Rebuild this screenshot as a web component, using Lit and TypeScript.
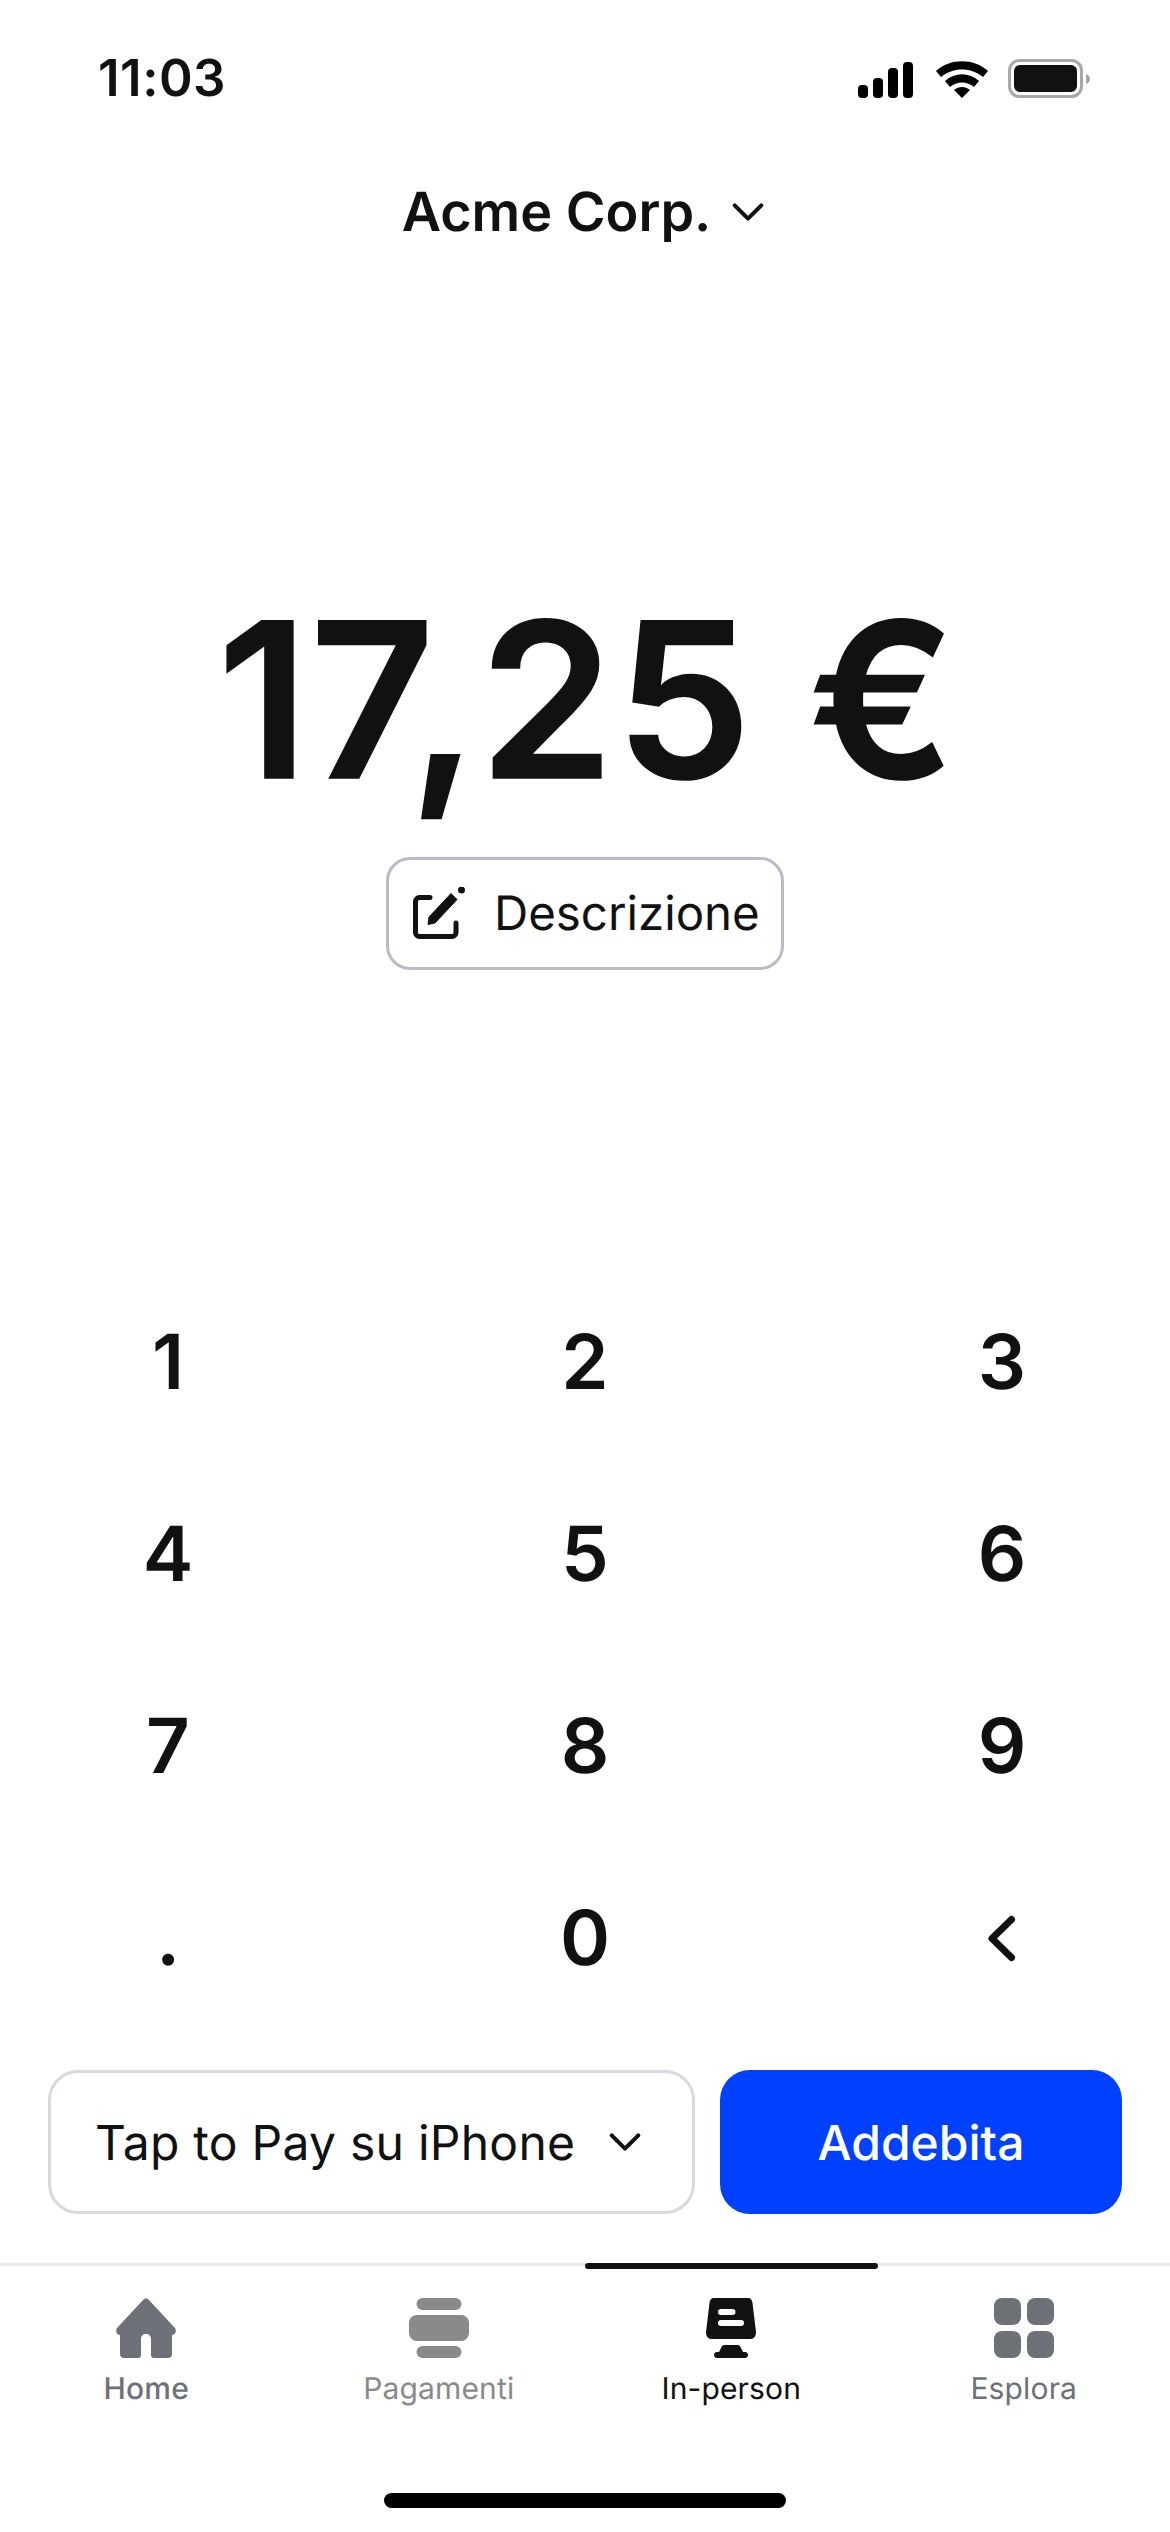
import { LitElement, html, css } from "lit";
import { customElement } from "lit/decorators.js";

const chevron = () => html`<svg width="40" height="40" viewBox="0 0 24 24" fill="none" stroke="#111" stroke-width="2.4" stroke-linecap="round" stroke-linejoin="round"><path d="M4 8l8 8 8-8"/></svg>`;

@customElement("app-root")
export class AppRoot extends LitElement {
  static styles = css`
    :host { display: block; width: 1170px; height: 2532px; background: #fff; color: #111; font-family: Inter, "Liberation Sans", sans-serif; overflow: hidden; text-rendering: geometricPrecision; }
    .page { display: flex; flex-direction: column; height: 2532px; }
    .status { display: flex; justify-content: space-between; align-items: center; height: 78px; padding: 39px 80px 0 98px; }
    .time { font-size: 51px; font-weight: 600; line-height: 1; letter-spacing: 0.5px; }
    .status svg { display: block; }
    .head { display: flex; justify-content: center; align-items: center; gap: 17px; margin-top: 56px; height: 78px; font-size: 54px; font-weight: 600; }
    .amount { margin-top: 330px; height: 240px; line-height: 240px; text-align: center; font-size: 216px; font-weight: 600; letter-spacing: 1.5px; -webkit-text-stroke: 1.5px #111; white-space: nowrap; padding-left: 4px; }
    .desc-row { display: flex; justify-content: center; margin-top: 36px; }
    .desc { display: flex; align-items: center; gap: 27px; width: 398px; height: 113px; box-sizing: border-box; padding-left: 24px; border: 3px solid #b9bcc7; border-radius: 24px; font-size: 47.4px; }
    .keypad { display: grid; grid-template-columns: 168px 1fr 168px; grid-auto-rows: 192px; margin-top: 294px; width: 1002px; margin-left: 84px; }
    .key { display: flex; align-items: center; justify-content: center; padding-top: 3px; font-size: 76px; font-weight: 600; }
    .actions { display: flex; gap: 25px; padding: 0 48px; margin-top: 38px; }
    .select { flex: 0 0 647px; height: 144px; box-sizing: border-box; border: 3px solid #d8d8e0; border-radius: 30px; display: flex; align-items: center; justify-content: space-between; padding: 0 47px 0 44px; font-size: 48px; letter-spacing: 0.25px; }
    .charge { flex: 1; height: 144px; border-radius: 30px; background: #0041ff; color: #fff; display: flex; align-items: center; justify-content: center; font-size: 48px; font-weight: 500; }
    .tabs { position: relative; display: grid; grid-template-columns: repeat(4, 1fr); margin-top: 49px; border-top: 3px solid #ebebf0; height: 229px; box-sizing: border-box; }
    .active-bar { position: absolute; left: 585px; top: -3px; width: 293px; height: 6px; border-radius: 3px; background: #111; }
    .tab { display: flex; flex-direction: column; align-items: center; padding-top: 32px; font-size: 30px; font-weight: 500; letter-spacing: 0.15px; color: #6f7179; }
    .tab svg { display: block; margin-bottom: 13px; }
    .tab.pay { color: #8a8a8a; font-weight: 400; }
    .tab.on { color: #111; font-weight: 400; }
    .tab.more { font-weight: 400; }
    .home { position: absolute; left: 384px; top: 2493px; width: 402px; height: 15px; border-radius: 8px; background: #000; }
  `;

  render() {
    const keys = ["1","2","3","4","5","6","7","8","9",".","0"];
    return html`<div class="page">
      <div class="status">
        <span class="time">11:03</span>
        <svg width="232" height="39" viewBox="0 0 232 39">
          <rect x="0" y="26" width="10" height="13" rx="4" fill="#000"/>
          <rect x="15" y="19" width="10" height="20" rx="4" fill="#000"/>
          <rect x="30" y="9" width="10" height="30" rx="4" fill="#000"/>
          <rect x="45" y="3" width="10" height="36" rx="4" fill="#000"/>
          <path d="M78 12 C92 -1 116 -1 130 12 L125 18 C113 8 95 8 83 18Z M87 22 C97 13 111 13 121 22 L116 28 C109 22 99 22 92 28Z M96 31 C101 27 107 27 112 31 L104 39Z" fill="#000"/>
          <rect x="151.500" y="1.500" width="72" height="36" rx="10" fill="#fff" stroke="#a8a8a8" stroke-width="3"/>
          <rect x="156" y="6" width="63" height="27" rx="6" fill="#111"/>
          <path d="M228 15 C231 16 232 18 232 20 C232 22 231 24 228 25Z" fill="#a8a8a8"/>
        </svg>
      </div>
      <div class="head"><span>Acme Corp.</span>${chevron()}</div>
      <div class="amount">17,25 €</div>
      <div class="desc-row"><div class="desc">
        <svg width="54" height="54" viewBox="0 0 54 54" fill="none"><path d="M17 10.500H6.500a4 4 0 0 0-4 4V45.500a4 4 0 0 0 4 4H39a4 4 0 0 0 4-4V36" stroke="#111" stroke-width="5" stroke-linecap="round" stroke-linejoin="round"/><path d="M15 37.500L16 30L38 6.500L44 12.500L22 36Z" fill="#111" stroke="#111" stroke-linejoin="round"/><circle cx="48.500" cy="3" r="3.500" fill="#111"/></svg>
        <span>Descrizione</span>
      </div></div>
      <div class="keypad">
        ${keys.map((k) => html`<div class="key">${k}</div>`)}
        <div class="key"><svg width="44" height="60" viewBox="0 0 44 60" fill="none" stroke="#111" stroke-width="7" stroke-linecap="round" stroke-linejoin="round"><path d="M31.500 11.500L12 30.500l19.500 19"/></svg></div>
      </div>
      <div class="actions">
        <div class="select"><span>Tap to Pay su iPhone</span>${chevron()}</div>
        <div class="charge">Addebita</div>
      </div>
      <div class="tabs">
        <div class="active-bar"></div>
        <div class="tab"><svg width="60" height="60" viewBox="0 0 60 60"><path fill="#6f7179" d="M27.500 1.500C28.500 0 31.500 0 32.500 1.500L59 30C61 33 59 37 56 37V56C56 58.500 54.500 60 52 60H38C36 60 35 59 35 57V41C35 38 33 36 30 36C27 36 25 38 25 41V57C25 59 24 60 22 60H8C5.500 60 4 58.500 4 56V37C1 37 -1 33 1 30Z"/></svg>Home</div>
        <div class="tab pay"><svg width="60" height="60" viewBox="0 0 60 60" fill="#8a8a8a"><rect x="7.500" y="0" width="45" height="12" rx="6"/><rect x="0" y="17" width="60" height="26" rx="8"/><rect x="7.500" y="48" width="45" height="12" rx="6"/></svg>Pagamenti</div>
        <div class="tab on"><svg width="60" height="60" viewBox="0 0 60 60"><path fill="#111" fill-rule="evenodd" d="M13 0H47C50 0 51 2 51.500 5L55 34C55 38 53 41 50 41H10C7 41 5 38 5 34L8.500 5C9 2 10 0 13 0ZM20 11a3 3 0 0 0 0 6H31.500a3 3 0 0 0 0-6ZM20 22a3 3 0 0 0 0 6H40a3 3 0 0 0 0-6Z"/><path fill="#111" d="M23 47H37C38 47 39 48 39.500 49L42 54H44C46 54 47 55.500 47 57S46 60 44 60H16C14 60 13 58.500 13 57S14 54 16 54H18L20.500 49C21 48 22 47 23 47Z"/></svg>In-person</div>
        <div class="tab more"><svg width="60" height="60" viewBox="0 0 60 60" fill="#6f7179"><rect x="0" y="0" width="27" height="27" rx="8"/><rect x="33" y="0" width="27" height="27" rx="8"/><rect x="0" y="33" width="27" height="27" rx="8"/><rect x="33" y="33" width="27" height="27" rx="8"/></svg>Esplora</div>
      </div>
      <div class="home"></div>
    </div>`;
  }
}
